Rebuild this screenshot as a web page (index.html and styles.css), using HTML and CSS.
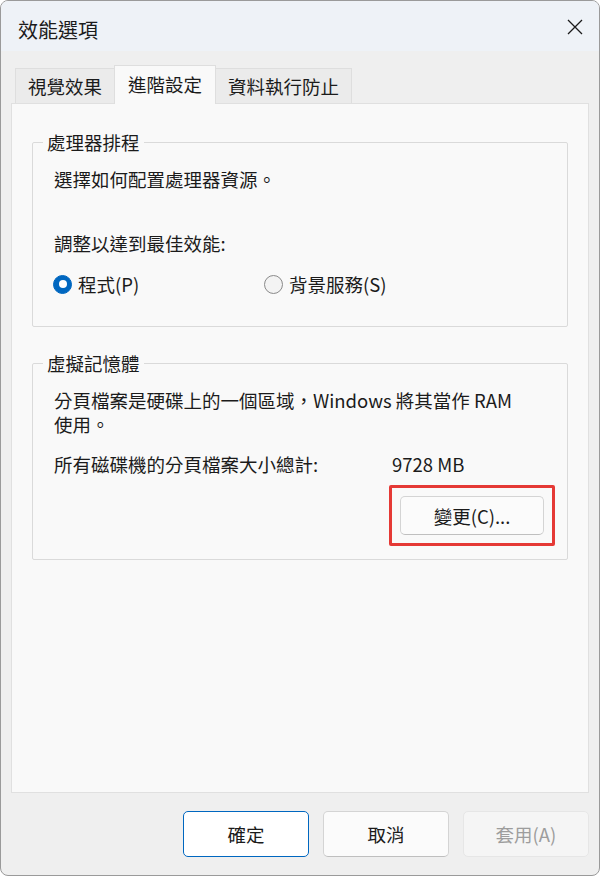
FILE: index.html
```html
<!DOCTYPE html>
<html lang="zh-Hant">
<head>
    <meta charset="UTF-8">
    <meta name="viewport" content="width=device-width, initial-scale=1.0">
    <title>效能選項</title>
    <link rel="stylesheet" href="styles.css">
</head>
<body>
<div class="window">
    <div class="titlebar">
        <span class="title">效能選項</span>
        <svg class="close" width="16" height="16" viewBox="0 0 16 16">
            <path d="M1 1 L15 15 M15 1 L1 15" stroke="#1b1b1b" stroke-width="1.3" fill="none"/>
        </svg>
    </div>
    <div class="content">
        <div class="tabs">
            <div class="tab first">視覺效果</div>
            <div class="tab active">進階設定</div>
            <div class="tab last">資料執行防止</div>
        </div>
        <div class="panel">
            <fieldset class="group">
                <legend>處理器排程</legend>
                <div class="groupBody">
                    <p class="line intro">選擇如何配置處理器資源。</p>
                    <p class="line adjust">調整以達到最佳效能:</p>
                    <div class="radios">
                        <label class="radio"><span class="dot checked"></span>程式(P)</label>
                        <label class="radio"><span class="dot"></span>背景服務(S)</label>
                    </div>
                </div>
            </fieldset>
            <fieldset class="group memory">
                <legend>虛擬記憶體</legend>
                <div class="groupBody">
                    <p class="desc">分頁檔案是硬碟上的一個區域，Windows 將其當作 RAM<br>使用。</p>
                    <div class="sizeRow">
                        <span class="sizeLabel">所有磁碟機的分頁檔案大小總計:</span>
                        <span>9728 MB</span>
                    </div>
                    <div class="changeRow">
                        <div class="highlight">
                            <button class="btn change">變更(C)...</button>
                        </div>
                    </div>
                </div>
            </fieldset>
        </div>
    </div>
    <div class="footer">
        <button class="btn primary">確定</button>
        <button class="btn">取消</button>
        <button class="btn disabled">套用(A)</button>
    </div>
</div>
</body>
</html>
```

FILE: styles.css
```css
* {
    box-sizing: border-box;
}
body {
    margin: 0;
    font: 18.5px/24px "Noto Sans CJK TC", sans-serif;
    color: #1b1b1b;
    background: #fff;
}
.window {
    display: flex;
    flex-direction: column;
    width: 600px;
    height: 876px;
    background: #efefef;
    border: 1px solid #9a9a9a;
    border-radius: 8px;
    overflow: hidden;
}
.titlebar {
    display: flex;
    justify-content: space-between;
    align-items: flex-start;
    height: 50px;
    padding: 0 16px 0 17px;
    background: #eef2f7;
}
.title {
    margin-top: 17px;
    font-size: 20px;
}
.close {
    margin-top: 18px;
}
.content {
    display: flex;
    flex-direction: column;
    flex: 1;
    padding: 14px 10px 0 10px;
}
.tabs {
    display: flex;
    align-items: flex-end;
    height: 38px;
    margin-left: 4px;
}
.tab {
    height: 35px;
    line-height: 34px;
    padding: 0 12px;
    background: #ebebeb;
    border: 1px solid #dedede;
    border-bottom: none;
}
.tab.first {
    border-right: none;
}
.tab.last {
    border-left: none;
}
.tab.active {
    position: relative;
    z-index: 1;
    height: 39px;
    line-height: 36px;
    margin-bottom: -1px;
    padding: 0 13px;
    background: #f9f9f9;
}
.panel {
    flex: 1;
    padding: 26px 20px 0;
    background: #f9f9f9;
    border: 1px solid #e0e0e0;
}
.group {
    margin: 0;
    padding: 0;
    min-width: 0;
    border: 1px solid #dadada;
    border-radius: 2px;
}
.group legend {
    margin-left: 10px;
    padding: 0 4px;
}
.group.memory {
    margin-top: 24px;
}
.groupBody {
    padding: 0 12px 30px 21px;
}
.line {
    margin: 0;
}
.intro {
    margin-top: 13px;
}
.adjust {
    margin-top: 40px;
}
.radios {
    display: grid;
    grid-template-columns: 211px auto;
    margin-top: 17px;
}
.radio {
    display: flex;
    align-items: center;
    gap: 6px;
    margin-left: -1px;
}
.dot {
    display: flex;
    justify-content: center;
    align-items: center;
    width: 19px;
    height: 19px;
    border: 1px solid #8a8a8a;
    border-radius: 50%;
    background: #f3f3f3;
}
.dot.checked {
    border-color: #0067c0;
    background: #0067c0;
}
.dot.checked::after {
    content: "";
    width: 8px;
    height: 8px;
    border-radius: 50%;
    background: #fff;
}
.memory .groupBody {
    padding-bottom: 13px;
}
.desc {
    margin: 13px 0 0;
}
.sizeRow {
    display: flex;
    margin-top: 16px;
}
.sizeLabel {
    width: 338px;
}
.changeRow {
    display: flex;
    justify-content: flex-end;
    margin-top: 9px;
}
.highlight {
    padding: 8px;
    border: 3px solid #e53935;
    border-radius: 2px;
}
.btn {
    display: block;
    font: inherit;
    color: #1b1b1b;
    background: #fbfbfb;
    border: 1px solid #d4d4d4;
    border-bottom-color: #bfbfbf;
    border-radius: 5px;
    padding: 0;
}
.btn.change {
    width: 144px;
    height: 39px;
}
.footer {
    display: flex;
    justify-content: flex-end;
    gap: 14px;
    padding: 18px 10px 18px;
}
.footer .btn {
    width: 126px;
    height: 46px;
}
.btn.primary {
    background: #fff;
    border: 1px solid #0067c0;
}
.btn.disabled {
    color: #9d9d9d;
    background: #f5f5f5;
    border: 1px solid #e6e6e6;
}
```
